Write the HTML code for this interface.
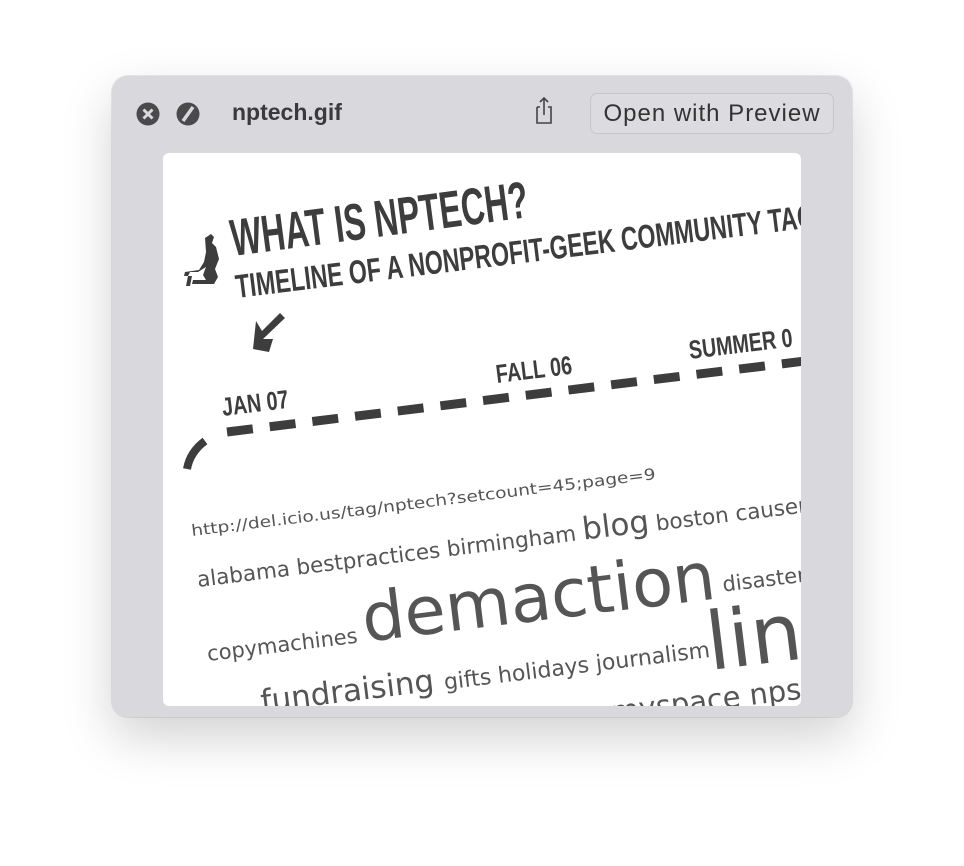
<!DOCTYPE html>
<html><head><meta charset="utf-8"><style>
html,body{margin:0;padding:0;background:#fff;width:964px;height:866px;overflow:hidden}
.win{position:absolute;left:112px;top:76px;width:740px;height:641px;background:#d9d8dc;border-radius:16px;box-shadow:0 20px 50px rgba(0,0,0,0.18),0 0 0 1px rgba(0,0,0,0.08)}
.title{position:absolute;left:232px;top:99px;font:bold 23px "Liberation Sans",sans-serif;color:#3a3a3c}
.btn{position:absolute;left:590px;top:93px;width:244px;height:41px;box-sizing:border-box;border:1px solid #c6c5ca;border-radius:7px;background:#dcdbe0;font:24px "Liberation Sans",sans-serif;letter-spacing:1px;color:#333;text-align:center;line-height:39px}
.img{position:absolute;left:163px;top:153px;width:638px;height:553px;background:#fff;border-radius:6px;overflow:hidden}
</style></head><body>
<div class="win"></div>
<svg style="position:absolute;left:0;top:0" width="964" height="866">
<circle cx="148" cy="114" r="11.5" fill="#4a4a4d"/>
<path d="M143.5 109.5l9 9M152.5 109.5l-9 9" stroke="#d9d8dc" stroke-width="3"/>
<circle cx="188" cy="114" r="11.5" fill="#4a4a4d"/>
<path d="M183 121l10-14" stroke="#d9d8dc" stroke-width="3.5"/>
<path d="M537 107v16h14v-16h-3M540 107h-3M544 115v-17M540 102l4-4 4 4" fill="none" stroke="#444" stroke-width="1.6"/>
</svg>
<div class="title">nptech.gif</div>
<div class="btn">Open with Preview</div>
<div class="img">
<svg width="638" height="553" style="position:absolute;left:0;top:0">
<g transform="translate(-163,-153)" fill="#3d3d3d">
<text transform="translate(233,256) rotate(-7.5) scale(0.63,1)" font-family="Liberation Sans" font-weight="bold" font-size="52">WHAT IS NPTECH?</text>
<text transform="translate(237,298) rotate(-7) scale(0.7,1)" font-family="Liberation Sans" font-weight="bold" font-size="33">TIMELINE OF A NONPROFIT-GEEK COMMUNITY TAG</text>
<path d="M205 238l6-4 3 3-2 6 4 4 3 12-4 10 3 8-4 7h-22l1-4h13l-3-5 3-8-8 5h-8l-2 4h4l-2 10h-4l2-10h-4l1-4 14-2 5-8 2-10z" />
<path d="M285 318l-22 21h10l-4 13-16-3 3-28 6 10 18-18z"/>
<text transform="translate(223,416) rotate(-7) scale(0.76,1)" font-family="Liberation Sans" font-weight="bold" font-size="26">JAN 07</text>
<text transform="translate(497,383) rotate(-7) scale(0.76,1)" font-family="Liberation Sans" font-weight="bold" font-size="26">FALL 06</text>
<text transform="translate(690,359) rotate(-7) scale(0.76,1)" font-family="Liberation Sans" font-weight="bold" font-size="26">SUMMER 0</text>
<path d="M227 432L805 361" stroke="#3d3d3d" stroke-width="9" stroke-dasharray="26 17" fill="none"/>
<path d="M187 469q3-17 18-28" stroke="#3d3d3d" stroke-width="8" fill="none"/>
<g fill="#555" font-family="DejaVu Sans,Liberation Sans,sans-serif">
<text transform="translate(192,536) rotate(-7) scale(1.2,1)" font-size="15.5">http://del.icio.us/tag/nptech?setcount=45;page=9</text>
<text transform="translate(198,587) rotate(-7)" font-size="21.5">alabama bestpractices birmingham <tspan font-size="31">blog</tspan> boston causer</text>
<text transform="translate(208,661) rotate(-7)" font-size="21">copymachines <tspan font-size="67">demaction</tspan> <tspan dy="-6">disaster</tspan></text>
<text transform="translate(710,670) rotate(-7)" font-size="80">link</text>
<text transform="translate(262,712) rotate(-7)" font-size="31">fundraising <tspan font-size="22">gifts holidays journalism</tspan></text>
<text transform="translate(612,722) rotate(-7)" font-size="29">myspace npsl</text>
</g>
</g>
</svg>
</div>
</body></html>
